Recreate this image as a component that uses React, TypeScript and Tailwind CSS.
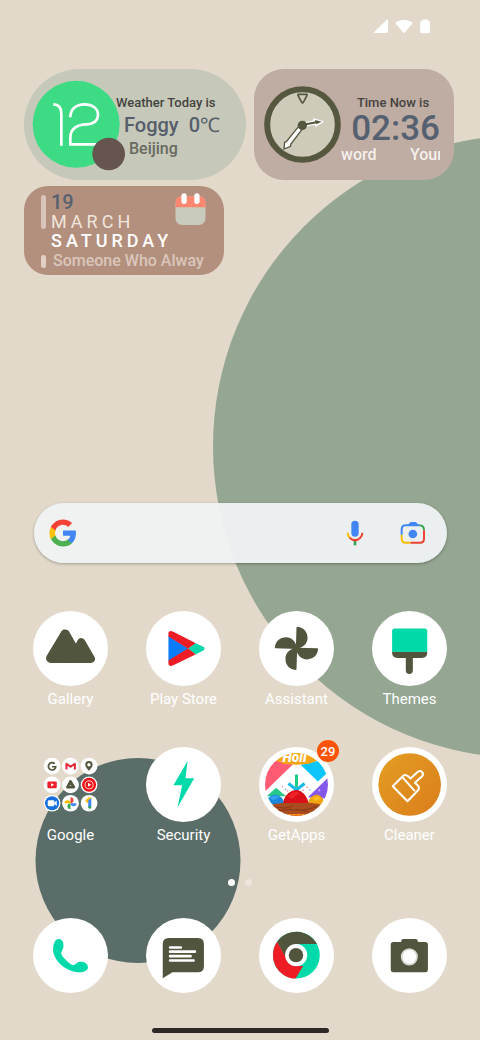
import React from "react";

const OLIVE = "#52553d";
const MINT = "#00d9a9";

function Wallpaper() {
  return (
    <svg
      className="absolute inset-0 h-full w-full"
      viewBox="0 0 480 1040"
      preserveAspectRatio="xMidYMid slice"
      aria-hidden="true"
    >
      <rect width="480" height="1040" fill="#e2d9ca" />
      <circle cx="524.500" cy="446.500" r="311.500" fill="#95a692" />
      <circle cx="138" cy="860.5" r="102.5" fill="#5a6d68" />
    </svg>
  );
}

function StatusBar() {
  return (
    <header className="flex h-[69px] items-start justify-end gap-1.5 pr-[49px] pt-[18px]">
      <svg className="h-4 w-4" viewBox="0 0 16 16" fill="#fff" aria-label="Signal">
        <path d="M15 2.6V13.6Q15 15 13.6 15H1.6Q.2 15 1.2 14L13.4 2Q15 .8 15 2.6Z" />
      </svg>
      <svg className="h-4 w-[18px]" viewBox="0 0 18 16" fill="#fff" aria-label="Wi-Fi">
        <path d="M.6 5.6Q-.2 4.8 .9 4.2Q9 -.8 17.1 4.2Q18.2 4.8 17.4 5.6L9.8 14.6Q9 15.6 8.2 14.6Z" />
      </svg>
      <svg className="h-4 w-3" viewBox="0 0 12 16" fill="#fff" aria-label="Battery">
        <path d="M3.2 2.500Q3.4 1.500 4.6 1.500H7.4Q8.6 1.500 8.8 2.500Q10.800 2.500 10.800 4V14Q10.800 15.2 9.4 15.2H2.6Q1.200 15.2 1.200 14V4Q1.200 2.500 3.2 2.500Z" />
      </svg>
    </header>
  );
}

function WeatherWidget() {
  return (
    <section aria-label="Weather" className="flex min-w-0 items-center rounded-full bg-[#c6c8ba] pl-2">
      <svg className="h-[90px] w-[84px] shrink-0 overflow-visible" viewBox="66 57 252 270" aria-hidden="true">
        <circle cx="198.500" cy="190" r="130.500" fill="#3ddc84" />
        <g fill="none" stroke="#fff" strokeWidth="8">
          <path d="M130 130Q154 130 154 158V254" />
          <path d="M181 169C181 145 198 130 223 130C248 130 264 143 264 161C264 180 249 190 230 190C202 190 181 203 181 230V250H258" />
        </g>
        <circle cx="296" cy="279" r="49" fill="#66554f" />
      </svg>
      <div className="flex flex-col whitespace-nowrap pt-1">
        <p className="text-[13px] leading-5 font-medium text-[#434440]">Weather Today is</p>
        <p className="flex gap-2.5 pl-2 text-xl leading-6 font-medium text-[#555e6a]">
          <span>Foggy</span>
          <span>0℃</span>
        </p>
        <p className="pl-[13px] text-base leading-6 font-medium text-[#686a60]">Beijing</p>
      </div>
    </section>
  );
}

function ClockWidget() {
  return (
    <section aria-label="Clock" className="flex min-w-0 items-center rounded-[30px] bg-[#bfaca2] pl-2.5 pr-3.5">
      <svg className="h-[77px] w-[77px] shrink-0" viewBox="57 76 231 231" aria-hidden="true">
        <circle cx="172.500" cy="191.500" r="106" fill="#cfcbba" stroke="#56573f" strokeWidth="18" />
        <path d="M160 101H185Q187 101 186 104L175 125Q172 128 170 125L159 104Q158 101 160 101Z" fill="none" stroke="#56573f" strokeWidth="5" />
        <path d="M172 193L212 185" stroke="#fff" strokeWidth="14" />
        <path d="M206 174L235 183L212 197Z" fill="#fff" stroke="#fff" strokeWidth="3" strokeLinejoin="round" />
        <path d="M172 193L214 185" stroke="#56573f" strokeWidth="6" />
        <path d="M210 178L230 183L214 191Z" fill="#56573f" />
        <path d="M166 191L124 243L119 244L117 265L137 257V251L176 200" fill="#fff" stroke="#56573f" strokeWidth="4" />
        <circle cx="172" cy="194" r="14" fill="#56573f" />
      </svg>
      <div className="min-w-0 flex-1 whitespace-nowrap pt-2">
        <p className="pl-[5px] text-center text-[13px] leading-5 font-medium text-[#434440]">Time Now is</p>
        <p className="text-right text-[35px] leading-8 font-medium text-[#556170]">02:36</p>
        <p className="flex justify-between gap-8 overflow-hidden text-base leading-5 font-medium text-[#f5f0ec]">
          <span>word</span>
          <span className="w-[30px] overflow-hidden">Your</span>
        </p>
      </div>
    </section>
  );
}

function DateWidget() {
  return (
    <section aria-label="Date" className="mt-1.5 flex h-[89px] w-[200px] justify-between rounded-3xl bg-[#b3907d] pl-[17px] pr-[18px] pt-[7px]">
      <div className="flex flex-col whitespace-nowrap">
        <div className="flex gap-[5px]">
          <span className="mt-0.5 h-[34px] w-[5px] rounded-full bg-[#d9c5bb]" />
          <div>
            <p className="text-xl leading-[19px] font-medium text-[#566170]">19</p>
            <p className="text-lg leading-[19px] tracking-[4px] text-[#f0e5de]">MARCH</p>
          </div>
        </div>
        <p className="pl-2.5 text-lg leading-5 font-medium tracking-[4px] text-white">SATURDAY</p>
        <div className="flex items-center gap-[7px]">
          <span className="h-[13px] w-[5px] rounded-full bg-[#e2d0c7]" />
          <p className="text-base leading-5 font-medium text-[#dac6bc]">Someone Who Alway</p>
        </div>
      </div>
      <svg className="-ml-12 h-8 w-[31px] shrink-0" viewBox="494 38 93 97" aria-hidden="true">
        <rect x="495" y="48" width="91" height="87" rx="20" fill="#c8cbbb" />
        <path d="M495 81V68Q495 48 515 48H566Q586 48 586 68V81Z" fill="#fe8772" />
        <rect x="513" y="39" width="16" height="32" rx="8" fill="#fff" />
        <rect x="552" y="39" width="16" height="32" rx="8" fill="#fff" />
      </svg>
    </section>
  );
}

function SearchBar() {
  return (
    <form
      role="search"
      onSubmit={(e) => e.preventDefault()}
      className="mt-[228px] ml-[34px] mr-[33px] flex h-[60px] items-center rounded-full bg-[#f0f3f4]/94 pl-[15px] pr-[21px] shadow-[0_1px_3px_rgba(0,0,0,0.3)]"
    >
      <svg className="h-7 w-7 shrink-0" viewBox="0.600 0.600 22.800 22.800" aria-hidden="true">
        <path fill="#4285f4" d="M22.56 12.25c0-.78-.07-1.53-.2-2.25H12v4.26h5.92c-.26 1.37-1.04 2.53-2.21 3.31v2.77h3.57c2.08-1.92 3.28-4.74 3.28-8.09z" />
        <path fill="#4caf50" d="M12 23c2.97 0 5.46-.98 7.28-2.66l-3.57-2.77c-.98.66-2.23 1.06-3.71 1.06-2.86 0-5.29-1.93-6.16-4.53H2.18v2.84C3.99 20.53 7.7 23 12 23z" />
        <path fill="#fbc10c" d="M5.84 14.09c-.22-.66-.35-1.36-.35-2.09s.13-1.43.35-2.09V7.07H2.18C1.43 8.55 1 10.22 1 12s.43 3.45 1.18 4.93l2.85-2.22.81-.62z" />
        <path fill="#f44336" d="M12 5.38c1.62 0 3.06.56 4.21 1.64l3.15-3.15C17.45 2.09 14.97 1 12 1 7.7 1 3.99 3.47 2.18 7.07l3.66 2.84c.87-2.6 3.3-4.53 6.16-4.53z" />
      </svg>
      <input type="search" aria-label="Search" className="h-full min-w-0 flex-1 bg-transparent px-3 outline-none" />
      <button type="button" aria-label="Voice search" className="shrink-0">
        <svg className="h-[26px] w-[18px]" viewBox="316 90 54 78">
          <rect x="332" y="92" width="22" height="48" rx="11" fill="#4285f4" />
          <path d="M343 151V166" stroke="#34a853" strokeWidth="8" />
          <path d="M321 128Q321 138 328 144" fill="none" stroke="#fbbc04" strokeWidth="6" />
          <path d="M327 143Q343 158 359 143Q365 137 365 128" fill="none" stroke="#ea4335" strokeWidth="6" />
        </svg>
      </button>
      <button type="button" aria-label="Search with camera" className="ml-9 shrink-0">
        <svg className="h-[26px] w-[26px]" viewBox="480 90 78 78">
          <g fill="none" strokeWidth="6">
            <path d="M485 134V119Q485 106 498 106H538" stroke="#4285f4" />
            <path d="M538 106Q552 106 552 121" stroke="#34a853" />
            <path d="M552 121V146Q552 158 540 158H511" stroke="#ea4335" />
            <path d="M511 158H497Q485 158 485 146V134" stroke="#fbbc04" />
          </g>
          <path d="M499 106Q505 106 508 100Q510 96 515 96H525Q529 96 531 100Q534 106 539 106V108H499Z" fill="#4285f4" />
          <circle cx="518.500" cy="132" r="13" fill="#4285f4" />
        </svg>
      </button>
    </form>
  );
}

function Disc({ view, children }: { view: string; children: React.ReactNode }) {
  return (
    <span className="block h-[75px] w-[75px] overflow-hidden rounded-full bg-white">
      <svg className="h-full w-full" viewBox={view} aria-hidden="true">
        {children}
      </svg>
    </span>
  );
}

const gallery = (
  <Disc view="41 32 224 224">
    <g fill={OLIVE} stroke={OLIVE} strokeLinejoin="round">
      <path d="M94 173L137 101L178 173Z" strokeWidth="28" />
      <path d="M185 125L214 175H160Z" strokeWidth="24" />
    </g>
  </Disc>
);

const playStore = (
  <Disc view="380 32 224 224">
    <path d="M447 106L506 144L447 183Z" fill="#0a7cff" />
    <path d="M447 108V97Q449 89 460 93L529 128L506 145Z" fill="#ee1c25" />
    <path d="M447 180V190Q449 199 460 195L529 161L506 143Z" fill="#ee1c25" />
    <path d="M506 144L529 128L551 139Q559 144 551 150L529 161Z" fill={MINT} />
  </Disc>
);

const assistant = (
  <Disc view="59 32 224 224">
    {[0, 90, 180, 270].map((angle) => (
      <path
        key={angle}
        d="M171 81Q171 79 174 79C193 81 204 95 204 112C204 130 191 141 173 145L169 144Z"
        fill={OLIVE}
        transform={`rotate(${angle} 171 143.500)`}
      />
    ))}
  </Disc>
);

const themes = (
  <Disc view="397 32 224 224">
    <path d="M457 153H562V156Q562 172 546 172H519V210Q519 220 508.500 220Q498 220 498 210V172H473Q457 172 457 156Z" fill={OLIVE} />
    <path d="M457 154V92Q457 84 465 84H554Q562 84 562 92V154Z" fill={MINT} />
  </Disc>
);

const security = (
  <Disc view="379 35 224 224">
    <path d="M503 77L461 149H487L473 216L523 128H497Z" fill={MINT} />
  </Disc>
);

const getApps = (
  <Disc view="59 35 224 224">
    <defs>
      <clipPath id="festival">
        <circle cx="171" cy="147" r="94" />
      </clipPath>
    </defs>
    <g clipPath="url(#festival)">
      <rect x="70" y="50" width="200" height="200" fill="#fff" />
      <path d="M70 175L160 87L110 75L60 110Z" fill="#ff5c74" />
      <path d="M183 88L235 138L270 106L240 75Z" fill="#0cc5fb" />
      <path d="M205 185L266 126V190Z" fill="#8458e8" />
      <path d="M82 182L110 157L140 182Z" fill="#27c989" />
      <ellipse cx="171" cy="58" rx="76" ry="30" fill="#f7a516" />
      <text x="129" y="79" fill="#fff" fontFamily="Roboto, sans-serif" fontSize="41" fontWeight="900" fontStyle="italic">
        Holi
      </text>
      <path d="M171 117V157" stroke="#1ccc84" strokeWidth="9" />
      <path d="M147 144L171 163L195 144" fill="none" stroke="#15b9e8" strokeWidth="9" />
      <path d="M82 207Q82 180 107 177Q130 180 136 207Z" fill="#1788dd" />
      <path d="M88 187Q105 174 119 184L103 194Z" fill="#33a3ef" />
      <path d="M204 207Q210 180 232 177Q250 180 255 207Z" fill="#f3a40d" />
      <path d="M218 188Q234 178 243 188L228 197Z" fill="#ffbf20" />
      <path d="M82 208Q171 194 260 208V245H82Z" fill="#a94c20" />
      <path d="M100 211Q132 223 161 211M148 220Q190 231 234 212M111 226Q157 216 206 228" fill="none" stroke="#8a3a18" strokeWidth="3" />
      <path d="M131 202Q135 177 158 166Q171 160 184 167Q203 180 207 202Z" fill="#da1018" />
      <path d="M145 183Q160 164 180 172L158 190Z" fill="#ee2228" />
      <path d="M112 245Q171 223 230 245Z" fill="#ed7412" />
      <path d="M121 237H221" stroke="#ff9828" strokeWidth="4" strokeDasharray="8 5" />
      <g fill="#e44b75">
        <circle cx="129" cy="154" r="2" />
        <circle cx="144" cy="166" r="2" />
        <circle cx="203" cy="155" r="2" />
        <circle cx="191" cy="164" r="2" />
      </g>
      <circle cx="138" cy="161" r="2" fill="#5574d8" />
      <circle cx="211" cy="163" r="2" fill="#5574d8" />
      <circle cx="239" cy="164" r="3" fill="#cfbcff" />
    </g>
  </Disc>
);

const cleaner = (
  <Disc view="397 35 224 224">
    <defs>
      <linearGradient id="amber" x1="0" y1="0" x2="1" y2="1">
        <stop offset="0" stopColor="#e39e22" />
        <stop offset="1" stopColor="#db7d1c" />
      </linearGradient>
    </defs>
    <circle cx="509.500" cy="147" r="93.500" fill="url(#amber)" />
    <g fill="none" stroke="#fff" strokeWidth="6" strokeLinejoin="round">
      <path d="M459 152L488 123Q494 115 503 121L512 129L534 109Q541 104 547 110Q552 117 546 123L525 142L535 151Q540 156 534 165L503 197Z" />
      <path d="M487 124L525 167" />
    </g>
  </Disc>
);

const phone = (
  <Disc view="40 144 224 224">
    <path d="M117 207C106 207 100 222 100 238C100 272 140 306 180 306C195 306 204 299 204 291C204 281 194 275 181 275C170 275 168 285 160 285C152 285 125 258 124 250C125 242 131 238 131 226C131 214 125 207 117 207Z" fill={MINT} />
  </Disc>
);

const messages = (
  <Disc view="379 144 224 224">
    <path d="M447 204H534Q552 204 552 222V288Q552 306 534 306H458L429 324V222Q429 204 447 204Z" fill={OLIVE} />
    <path d="M451 232H483M451 244.500H525M451 258H512M451 271H521" stroke="#fff" strokeWidth="8" strokeLinecap="round" />
  </Disc>
);

const chrome = (
  <Disc view="58 144 224 224">
    <circle cx="169.500" cy="255" r="70" fill={MINT} />
    <path d="M112 215A70 70 0 0 1 231 222H169L138 262Z" fill={OLIVE} />
    <path d="M112 215L140 265L169 287H190L167 325A70 70 0 0 1 112 215Z" fill="#ee1c25" />
    <circle cx="169" cy="255" r="33" fill="#fff" />
    <circle cx="168.500" cy="255" r="21.500" fill={OLIVE} />
  </Disc>
);

const camera = (
  <Disc view="397 144 224 224">
    <path d="M461 216H484V214Q484 207 491 207H527Q534 207 534 214V216H556Q564 216 564 224V298Q564 306 556 306H461Q453 306 453 298V224Q453 216 461 216Z" fill={OLIVE} />
    <circle cx="508.500" cy="260" r="23" fill="#fff" stroke="#d8d9d2" strokeWidth="5" />
  </Disc>
);

const folder = (
  <svg className="h-[75px] w-[75px]" viewBox="41 35 224 224" aria-hidden="true">
    <g fill="#fff">
      {[92, 148, 203].map((y) => [98, 153, 208.5].map((x) => <circle key={`${x}-${y}`} cx={x} cy={y} r="25" />))}
    </g>
    <path d="M106 85A11 11 0 1 0 109 94H98" fill="none" stroke={OLIVE} strokeWidth="5" />
    <path d="M141 102V85L153 94L166 85V102" fill="none" stroke="#e32632" strokeWidth="6" strokeLinejoin="round" />
    <path d="M208 107C203 98 197 95 197 88A11 11 0 0 1 219 88C219 95 213 98 208 107Z" fill={OLIVE} />
    <circle cx="208" cy="88" r="5" fill="#fff" />
    <rect x="84" y="138" width="28" height="20" rx="3" fill="#ee2029" />
    <path d="M95 143V153L104 148Z" fill="#fff" />
    <path d="M153 138L163 155H144Z" fill="#fff" stroke={OLIVE} strokeWidth="8" strokeLinejoin="round" />
    <circle cx="208.500" cy="148" r="21" fill="#f20d14" />
    <circle cx="208.500" cy="148" r="12" fill="none" stroke="#fff" strokeWidth="2.500" />
    <path d="M205 142V154L215 148Z" fill="#fff" />
    <circle cx="98" cy="203" r="21" fill="#176ee0" />
    <rect x="85" y="194" width="20" height="18" rx="4" fill="#fff" />
    <path d="M105 201L112 195V211L105 205Z" fill="#fff" />
    <path d="M153 203V185A9 9 0 0 1 153 203Z" fill="#ee4337" />
    <path d="M153 203H171A9 9 0 0 1 153 203Z" fill="#4285f4" />
    <path d="M153 203V221A9 9 0 0 1 153 203Z" fill="#34a853" />
    <path d="M153 203H135A9 9 0 0 1 153 203Z" fill="#fbbc04" />
    <path d="M207 186H215V195L202 202L197 195Z" fill="#fbbc04" />
    <path d="M206 194L215 187V214A5 5 0 0 1 206 214Z" fill="#4285f4" />
    <path d="M206 212H215V215A4.500 4.500 0 0 1 206 215Z" fill="#34a853" />
  </svg>
);

type AppItem = { name: string; icon: React.ReactNode; badge?: number };

const apps: AppItem[] = [
  { name: "Gallery", icon: gallery },
  { name: "Play Store", icon: playStore },
  { name: "Assistant", icon: assistant },
  { name: "Themes", icon: themes },
  { name: "Google", icon: folder },
  { name: "Security", icon: security },
  { name: "GetApps", icon: getApps, badge: 29 },
  { name: "Cleaner", icon: cleaner },
];

const dock: AppItem[] = [
  { name: "Phone", icon: phone },
  { name: "Messages", icon: messages },
  { name: "Chrome", icon: chrome },
  { name: "Camera", icon: camera },
];

export default function App() {
  return (
    <div className="relative min-h-screen overflow-hidden bg-[#e2d9ca] font-[Roboto,sans-serif]">
      <Wallpaper />
      <main className="relative flex min-h-screen flex-col">
        <StatusBar />
        <div className="pl-6 pr-[26px]">
          <div className="grid h-[111px] grid-cols-[222fr_200fr] gap-2">
            <WeatherWidget />
            <ClockWidget />
          </div>
          <DateWidget />
        </div>
        <SearchBar />
        <div className="mt-12 grid grid-cols-4 gap-y-[38px] px-3.5">
          {apps.map((app) => (
            <button key={app.name} type="button" className="flex flex-col items-center">
              <span className="relative block">
                {app.icon}
                {app.badge && (
                  <span className="absolute -right-[5px] -top-[7px] flex h-[22px] w-[22px] items-center justify-center rounded-full bg-[#fd5305] text-[13px] leading-none font-medium text-white">
                    {app.badge}
                  </span>
                )}
              </span>
              <span className="mt-[3px] text-[15px] leading-5 text-white">{app.name}</span>
            </button>
          ))}
        </div>
        <div className="mt-[34px] flex justify-center gap-2.5" aria-hidden="true">
          <span className="h-[7px] w-[7px] rounded-full bg-white" />
          <span className="h-[7px] w-[7px] rounded-full bg-white/35" />
        </div>
        <nav aria-label="Dock" className="mt-8 grid grid-cols-4 px-3.5">
          {dock.map((app) => (
            <button key={app.name} type="button" aria-label={app.name} className="flex justify-center">
              {app.icon}
            </button>
          ))}
        </nav>
        <div className="mx-auto mt-[35px] mb-[7px] h-[5px] w-[177px] rounded-full bg-[#2b2825]" />
      </main>
    </div>
  );
}
